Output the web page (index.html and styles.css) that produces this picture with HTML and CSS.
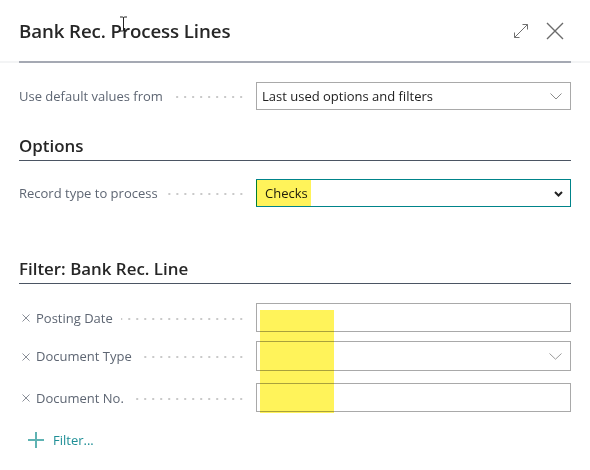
FILE: index.html
```html
<!DOCTYPE html>
<html>
<head>
<meta charset="utf-8">
<link rel="stylesheet" href="styles.css">
</head>
<body>
<div class="dialog">
  <div class="header">
    <h1 class="title">Bank Rec. Process Lines</h1>
    <div class="actions">
      <svg class="icon-expand" width="16" height="16" viewBox="0 0 16 16"><path d="M1.5 14.5 L14.5 1.5 M1.5 9.5 V14.5 H6.5 M9.5 1.5 H14.5 V6.5" fill="none" stroke="#707070" stroke-width="1"/></svg>
      <svg class="icon-close" width="18" height="18" viewBox="0 0 18 18"><path d="M1 1 L17 17 M17 1 L1 17" fill="none" stroke="#6b6b6b" stroke-width="1.4"/></svg>
    </div>
  </div>
  <div class="divider"></div>

  <div class="row first">
    <div class="label"><span class="text">Use default values from</span><span class="dots"></span></div>
    <div class="field">
      <span class="value">Last used options and filters</span>
      <svg class="chev" width="12" height="7" viewBox="0 0 12 7"><path d="M0.5 0.5 L6 6 L11.5 0.5" fill="none" stroke="#8a8a8a" stroke-width="1"/></svg>
    </div>
  </div>

  <h2 class="section options-head">Options</h2>
  <div class="row second">
    <div class="label"><span class="text">Record type to process</span><span class="dots"></span></div>
    <div class="field focused">
      <span class="value hl-text">Checks</span>
      <svg class="chev bold" width="9" height="6" viewBox="0 0 9 6"><path d="M1 1 L4.5 4.5 L8 1" fill="none" stroke="#222" stroke-width="2"/></svg>
    </div>
  </div>

  <h2 class="section filter-head">Filter: Bank Rec. Line</h2>
  <div class="filters">
    <div class="row frow">
      <div class="label"><svg class="x" width="8" height="8" viewBox="0 0 8 8"><path d="M0.5 0.5 L7.5 7.5 M7.5 0.5 L0.5 7.5" stroke="#8a8f98" stroke-width="1"/></svg><span class="text">Posting Date</span><span class="dots"></span></div>
      <div class="field"></div>
    </div>
    <div class="row frow tall">
      <div class="label"><svg class="x" width="8" height="8" viewBox="0 0 8 8"><path d="M0.5 0.5 L7.5 7.5 M7.5 0.5 L0.5 7.5" stroke="#8a8f98" stroke-width="1"/></svg><span class="text">Document Type</span><span class="dots"></span></div>
      <div class="field">
        <svg class="chev" width="13" height="7" viewBox="0 0 13 7"><path d="M0.5 0.5 L6.5 6.2 L12.5 0.5" fill="none" stroke="#9a9a9a" stroke-width="1"/></svg>
      </div>
    </div>
    <div class="row frow last">
      <div class="label"><svg class="x" width="8" height="8" viewBox="0 0 8 8"><path d="M0.5 0.5 L7.5 7.5 M7.5 0.5 L0.5 7.5" stroke="#8a8f98" stroke-width="1"/></svg><span class="text">Document No.</span><span class="dots"></span></div>
      <div class="field"></div>
    </div>
    <div class="hl-block"></div>
  </div>

  <div class="add-filter">
    <svg width="16" height="16" viewBox="0 0 16 16"><path d="M0 8 H16 M8 0 V16" stroke="#5fb3b3" stroke-width="2"/></svg>
    <span>Filter...</span>
  </div>

  <svg class="cursor" width="9" height="16" viewBox="0 0 9 16"><path d="M1 1 H3.5 Q4.5 1 4.5 2 V14 Q4.5 15 3.5 15 H1 M8 1 H5.5 Q4.5 1 4.5 2 M4.5 14 Q4.5 15 5.5 15 H8" fill="none" stroke="#222" stroke-width="1"/></svg>
</div>
</body>
</html>
```

FILE: styles.css
```css
* { box-sizing: border-box; }
html, body { margin: 0; padding: 0; background: #fff; }
body {
  font-family: "Open Sans", "Noto Sans", sans-serif;
  width: 590px;
  height: 470px;
  overflow: hidden;
}
.dialog {
  position: relative;
  padding: 0 19px;
  height: 470px;
}
.header {
  display: flex;
  align-items: center;
  justify-content: space-between;
  height: 61px;
}
.title {
  margin: 0;
  font-size: 18.7px;
  font-weight: 600;
  color: #262626;
  letter-spacing: -0.1px;
}
.actions {
  display: flex;
  align-items: center;
  gap: 17px;
  margin-right: 7px;
}
.icon-expand { margin-top: 1px; }
.divider {
  height: 2px;
  background: #a5a9b3;
  box-shadow: -19px 0 0 #f3f4f5, 19px 0 0 #f3f4f5;
}
.row {
  display: grid;
  grid-template-columns: 237px 1fr;
  align-items: center;
  height: 28px;
}
.row.first { margin-top: 19px; }
.label {
  display: flex;
  align-items: center;
  font-size: 13px;
  color: #5e6673;
  padding-right: 11px;
  white-space: nowrap;
}
.dots {
  flex: 1;
  height: 2px;
  margin-left: 8px;
  margin-top: 2px;
  background-image: radial-gradient(circle, #c9c9c9 0.9px, transparent 1.1px);
  background-size: 8px 2px;
  background-position: right center;
  background-repeat: repeat-x;
}
.field {
  position: relative;
  height: 28px;
  border: 1px solid #a9a9a9;
  display: flex;
  align-items: center;
  padding: 0 8px 0 5px;
  font-size: 13px;
  color: #212121;
}
.field .chev { margin-left: auto; }
.field.focused {
  border-color: #00848a;
  padding-left: 8px;
  padding-right: 7px;
}
.chev { display: block; }
.chev.bold { margin-top: 1px; }
.hl-text {
  position: relative;
}
.hl-text::before {
  content: "";
  position: absolute;
  left: -9px;
  right: -3px;
  top: -4px;
  bottom: -4px;
  background: #fff35a;
  mix-blend-mode: multiply;
}
.section {
  margin: 0;
  font-size: 16.9px;
  font-weight: 600;
  color: #262626;
  line-height: 22px;
  padding-top: 2px;
  padding-bottom: 3px;
  border-bottom: 1px solid #4b5563;
}
.options-head { margin-top: 23px; }
.row.second { margin-top: 18px; }
.filter-head { margin-top: 49px; }
.filters {
  position: relative;
  margin-top: 19px;
  display: flex;
  flex-direction: column;
}
.frow { height: 29px; }
.frow .field { height: 29px; }
.frow.tall { height: 30px; margin-top: 9px; }
.frow.tall .field { height: 30px; }
.frow.last { margin-top: 12px; }
.x {
  display: block;
  flex: none;
  margin: 1px 6px 0 3px;
}
.hl-block {
  position: absolute;
  left: 241px;
  width: 74px;
  top: 7px;
  height: 103px;
  background: #fff35a;
  mix-blend-mode: multiply;
}
.add-filter {
  display: flex;
  align-items: center;
  gap: 9px;
  margin-top: 19px;
  padding-left: 9px;
  font-size: 13px;
  color: #1f8f96;
}
.cursor {
  position: absolute;
  left: 119px;
  top: 16px;
}
```
